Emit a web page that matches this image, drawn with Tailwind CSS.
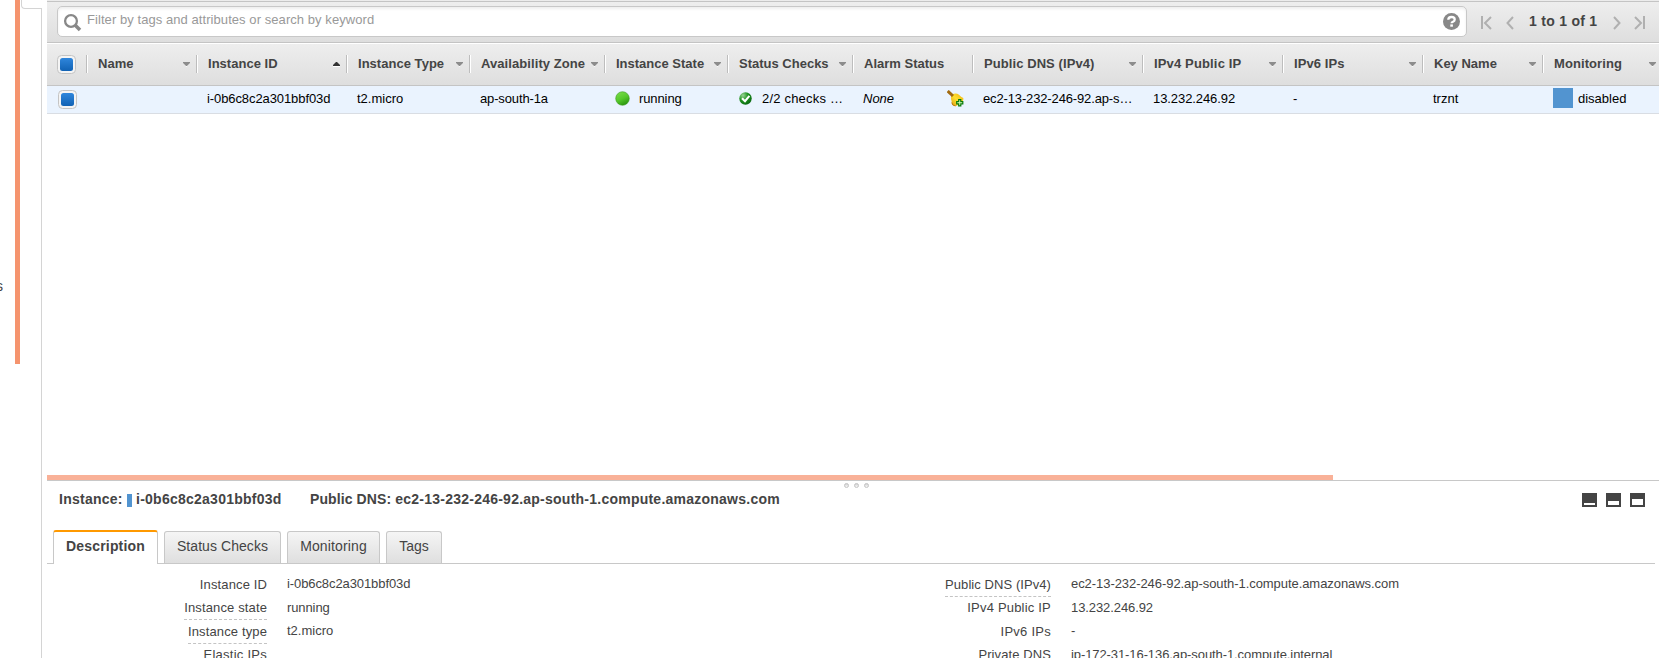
<!DOCTYPE html>
<html lang="en">
<head>
<meta charset="utf-8">
<title>EC2 Instances</title>
<script src="https://cdn.jsdelivr.net/npm/@tailwindcss/browser@4"></script>
</head>
<body class="h-[658px] w-[1659px] overflow-hidden bg-white font-['Liberation_Sans',Arial,sans-serif] text-[13px] leading-4 text-[#444]">
<svg class="absolute size-0">
  <defs>
    <linearGradient id="blue" x1="0" y1="0" x2="0" y2="1"><stop offset="0" stop-color="#2f86dc"/><stop offset="1" stop-color="#1162b4"/></linearGradient>
    <linearGradient id="ball" x1="0" y1="0" x2=".5" y2="1"><stop offset="0" stop-color="#7fe04e"/><stop offset=".6" stop-color="#55c82a"/><stop offset="1" stop-color="#2f9a10"/></linearGradient>
    <radialGradient id="ok" cx=".3" cy=".25" r=".8"><stop offset="0" stop-color="#9ad496"/><stop offset=".5" stop-color="#1f921f"/><stop offset="1" stop-color="#0a6a10"/></radialGradient>
    <linearGradient id="dot" x1="0" y1="0" x2="0" y2="1"><stop offset="0" stop-color="#ccc"/><stop offset="1" stop-color="#fff"/></linearGradient>
    <linearGradient id="bell" x1="0" y1="1" x2="1" y2="0"><stop offset="0" stop-color="#d99a10"/><stop offset=".5" stop-color="#ffe030"/><stop offset="1" stop-color="#eeb010"/></linearGradient>
    <symbol id="check" viewBox="0 0 19 19"><rect x=".5" y=".5" width="18" height="18" rx="4" fill="#f4f4f4" stroke="#c4c4c4"/><rect x="3" y="3" width="13" height="13" rx="2.5" fill="url(#blue)"/></symbol>
    <symbol id="down" viewBox="0 0 7 5"><path d="M0 1h7L3.5 5z" fill="#fff"/><path d="M0 0h7v1L4 4H3L0 1z" fill="#8c8c8c"/></symbol>
  </defs>
</svg>
<div class="flex h-full">
  <aside class="flex w-[47px] shrink-0">
    <div class="flex h-full w-[15px] items-start overflow-hidden pt-[278px]"><span class="-ml-[4px] text-[14px]">s</span></div>
    <div class="h-[364px] w-[5px] bg-[#f5946e]"></div>
    <div class="ml-px flex w-[21px] flex-col">
      <div class="h-[9px] w-[21px] rounded-bl-[4px] border-b border-l border-[#d4d4d4]"></div>
      <div class="w-[21px] flex-1 border-r border-[#d4d4d4]"></div>
    </div>
  </aside>

  <main class="flex w-[1612px] shrink-0 flex-col">
    <div class="h-px shrink-0 bg-[#ececec]"></div>
    <div class="flex h-[42px] shrink-0 items-start border-y border-[#c4c4c4] bg-linear-to-b from-[#eeeeee] to-[#dedede] pt-1 pl-[10px]">
      <div class="flex h-[31px] w-[1410px] items-center rounded-[5px] border border-[#c8c8c8] bg-white pr-[6px] pl-[5px] shadow-[inset_0_2px_3px_rgba(0,0,0,0.07)]">
        <svg class="mt-px" width="19" height="19" viewBox="0 0 19 19" fill="none"><circle cx="8" cy="8" r="5.9" stroke="#888" stroke-width="2.3"/><path d="M12 12l5 5" stroke="#888" stroke-width="3.6"/></svg>
        <span class="mb-[3px] ml-[5px] flex-1 tracking-[0.065px] text-[#999]">Filter by tags and attributes or search by keyword</span>
        <svg width="17" height="17" viewBox="0 0 17 17"><circle cx="8.500" cy="8.500" r="8.500" fill="#888"/><path d="M5.300 6.800Q5.300 4 8.500 4Q11.700 4 11.700 6.500Q11.700 8 10 8.700Q8.600 9.300 8.600 10.300" fill="none" stroke="#fff" stroke-width="2.300"/><rect x="7.300" y="11.400" width="2.600" height="2.300" fill="#fff"/></svg>
      </div>
      <div class="ml-[14px] flex h-[31px] items-center text-[14px] font-bold">
        <svg class="mt-[3px]" width="11" height="14" viewBox="0 0 11 14" fill="none" stroke="#b0b0b0" stroke-width="2"><path d="M1 0v13M10 1L4 7l6 6"/></svg>
        <svg class="mt-[3px] ml-[14px]" width="8" height="14" viewBox="0 0 8 14" fill="none" stroke="#b0b0b0" stroke-width="2"><path d="M7 1L1.500 7L7 13"/></svg>
        <span class="mb-px ml-[15px] w-[70px] tracking-[0.28px] whitespace-nowrap">1 to 1 of 1</span>
        <svg class="mt-[3px] ml-[14px]" width="8" height="14" viewBox="0 0 8 14" fill="none" stroke="#b0b0b0" stroke-width="2"><path d="M1 1l5.500 6L1 13"/></svg>
        <svg class="mt-[3px] ml-[13px]" width="11" height="14" viewBox="0 0 11 14" fill="none" stroke="#b0b0b0" stroke-width="2"><path d="M1 1l6 6l-6 6M10 0v13"/></svg>
      </div>
    </div>

    <div class="flex h-[43px] shrink-0 items-center border-t border-b border-t-white border-b-[#c4c4c4] bg-linear-to-b from-[#eeeeee] to-[#dedede] pb-[2px] font-bold tracking-[0.03px] whitespace-nowrap">
      <div class="w-[39px] pl-[10px]"><svg class="mt-px" width="19" height="19"><use href="#check"/></svg></div>
      <div class="flex h-[18px] w-[110px] items-center justify-between border-l border-[#bdbdbd] pr-[6px] pl-[11px] shadow-[inset_1px_0_0_#fff]"><span>Name</span><svg class="mt-[2px]" width="7" height="5"><use href="#down"/></svg></div>
      <div class="flex h-[18px] w-[150px] items-center justify-between border-l border-[#bdbdbd] pr-[6px] pl-[11px] shadow-[inset_1px_0_0_#fff]"><span>Instance ID</span><svg class="mt-px" width="7" height="5" viewBox="0 0 7 5"><path d="M0 4h7v1H0z" fill="#fff"/><path d="M3 0h1l3 3v1H0V3z" fill="#333"/></svg></div>
      <div class="flex h-[18px] w-[123px] items-center justify-between border-l border-[#bdbdbd] pr-[6px] pl-[11px] shadow-[inset_1px_0_0_#fff]"><span>Instance Type</span><svg class="mt-[2px]" width="7" height="5"><use href="#down"/></svg></div>
      <div class="flex h-[18px] w-[135px] items-center justify-between border-l border-[#bdbdbd] pr-[6px] pl-[11px] shadow-[inset_1px_0_0_#fff]"><span class="tracking-[0.08px]">Availability Zone</span><svg class="mt-[2px]" width="7" height="5"><use href="#down"/></svg></div>
      <div class="flex h-[18px] w-[123px] items-center justify-between border-l border-[#bdbdbd] pr-[6px] pl-[11px] shadow-[inset_1px_0_0_#fff]"><span class="tracking-normal">Instance State</span><svg class="mt-[2px]" width="7" height="5"><use href="#down"/></svg></div>
      <div class="flex h-[18px] w-[125px] items-center justify-between border-l border-[#bdbdbd] pr-[6px] pl-[11px] shadow-[inset_1px_0_0_#fff]"><span class="tracking-normal">Status Checks</span><svg class="mt-[2px]" width="7" height="5"><use href="#down"/></svg></div>
      <div class="flex h-[18px] w-[120px] items-center border-l border-[#bdbdbd] pl-[11px] shadow-[inset_1px_0_0_#fff]"><span class="tracking-normal">Alarm Status</span></div>
      <div class="flex h-[18px] w-[170px] items-center justify-between border-l border-[#bdbdbd] pr-[6px] pl-[11px] shadow-[inset_1px_0_0_#fff]"><span class="tracking-[0.08px]">Public DNS (IPv4)</span><svg class="mt-[2px]" width="7" height="5"><use href="#down"/></svg></div>
      <div class="flex h-[18px] w-[140px] items-center justify-between border-l border-[#bdbdbd] pr-[6px] pl-[11px] shadow-[inset_1px_0_0_#fff]"><span class="tracking-[0.15px]">IPv4 Public IP</span><svg class="mt-[2px]" width="7" height="5"><use href="#down"/></svg></div>
      <div class="flex h-[18px] w-[140px] items-center justify-between border-l border-[#bdbdbd] pr-[6px] pl-[11px] shadow-[inset_1px_0_0_#fff]"><span class="tracking-[0.1px]">IPv6 IPs</span><svg class="mt-[2px]" width="7" height="5"><use href="#down"/></svg></div>
      <div class="flex h-[18px] w-[120px] items-center justify-between border-l border-[#bdbdbd] pr-[6px] pl-[11px] shadow-[inset_1px_0_0_#fff]"><span class="tracking-normal">Key Name</span><svg class="mt-[2px]" width="7" height="5"><use href="#down"/></svg></div>
      <div class="flex h-[18px] w-[117px] items-center justify-between border-l border-[#bdbdbd] pr-[3px] pl-[11px] shadow-[inset_1px_0_0_#fff]"><span class="tracking-[0.08px]">Monitoring</span><svg class="mt-[2px]" width="7" height="5"><use href="#down"/></svg></div>
    </div>

    <div class="flex h-[28px] shrink-0 items-center border-b border-[#d9dde3] bg-[#eaf3fe] pb-px whitespace-nowrap text-black">
      <div class="w-[39px] pl-[11px]"><svg width="19" height="19"><use href="#check"/></svg></div>
      <div class="w-[110px]"></div>
      <div class="w-[150px] pl-[11px] tracking-[-0.09px]">i-0b6c8c2a301bbf03d</div>
      <div class="w-[123px] pl-[11px]">t2.micro</div>
      <div class="w-[135px] pl-[11px] tracking-[-0.14px]">ap-south-1a</div>
      <div class="flex w-[123px] items-center pl-[11px]"><svg class="-mt-px mr-[9px]" width="15" height="15" viewBox="0 0 15 15"><circle cx="7.500" cy="7.500" r="6.800" fill="url(#ball)" stroke="#3a9a20" stroke-width=".6"/></svg><span class="tracking-[-0.1px]">running</span></div>
      <div class="flex w-[125px] items-center pl-[12px]"><svg class="-mt-px mr-[9px]" width="13" height="13" viewBox="0 0 13 13"><circle cx="6.500" cy="6.500" r="6.200" fill="url(#ok)"/><path d="M3 6.300l3 2.900l4.400-5.400" fill="none" stroke="#fff" stroke-width="2.100"/></svg><span class="pl-px tracking-[0.2px]">2/2 checks …</span></div>
      <div class="flex w-[120px] items-center justify-between pr-[8px] pl-[11px]"><span class="italic">None</span>
        <svg class="-mt-px" width="17" height="17" viewBox="0 0 17 17"><path d="M5 4.500Q9 2.500 12 4.800Q14 7 16.300 8Q17 11 13 14L9 16Q6 16.500 5 14Q4.800 11 4 9Q3.400 6 5 4.500z" fill="url(#bell)"/><path d="M.7 1L6 6" stroke="#a26a10" stroke-width="3"/><path d="M4.800 12.500Q4.800 15.500 8.500 16" fill="none" stroke="#b97a10"/><path d="M11.700 9.700h2.100v2h2v2.100h-2v2h-2.100v-2h-2v-2.100h2z" fill="#d8ffc0" stroke="#087a08" stroke-width="1.200"/></svg>
      </div>
      <div class="w-[170px] pl-[11px] tracking-[-0.14px]">ec2-13-232-246-92.ap-s…</div>
      <div class="w-[140px] pl-[11px] tracking-[-0.08px]">13.232.246.92</div>
      <div class="w-[140px] pl-[11px]">-</div>
      <div class="w-[120px] pl-[11px]">trznt</div>
      <div class="flex w-[117px] items-center pl-[11px]"><span class="-mt-[2px] mr-[5px] size-5 bg-[#5294d0]"></span>disabled</div>
    </div>

    <div class="flex flex-1 items-end"><div class="h-[5px] w-[1286px] bg-[#f9b198]"></div></div>

    <section class="flex h-[178px] shrink-0 flex-col overflow-hidden border-t border-[#c8c8c8]">
      <div class="flex h-[7px] shrink-0 gap-[5px] pt-[2px] pl-[797px]">
        <svg width="5" height="5" viewBox="0 0 5 5"><circle cx="2.500" cy="2.500" r="2" fill="url(#dot)" stroke="#c4c4c4"/></svg>
        <svg width="5" height="5" viewBox="0 0 5 5"><circle cx="2.500" cy="2.500" r="2" fill="url(#dot)" stroke="#c4c4c4"/></svg>
        <svg width="5" height="5" viewBox="0 0 5 5"><circle cx="2.500" cy="2.500" r="2" fill="url(#dot)" stroke="#c4c4c4"/></svg>
      </div>
      <div class="flex h-[42px] shrink-0 items-start pr-[14px] pl-[12px] text-[14px] font-bold">
        <div class="flex w-[251px] pt-[3px] tracking-[0.25px] whitespace-nowrap"><span class="w-[68px]">Instance:</span><span class="mt-[3px] mr-1 h-[13px] w-[5px] bg-[#5294d0]"></span><span>i-0b6c8c2a301bbf03d</span></div>
        <div class="flex-1 pt-[3px]"><span class="tracking-[0.1px]">Public DNS: </span><span class="tracking-[0.24px]">ec2-13-232-246-92.ap-south-1.compute.amazonaws.com</span></div>
        <div class="flex gap-[9px] pt-[5px]">
          <svg width="15" height="14"><path fill="#444" d="M0 0h15v14H0z"/><path fill="#fff" d="M2 10h11v2H2z"/></svg>
          <svg width="15" height="14"><path fill="#444" d="M0 0h15v14H0z"/><path fill="#fff" d="M2 8h11v4H2z"/></svg>
          <svg width="15" height="14"><path fill="#444" d="M0 0h15v14H0z"/><path fill="#fff" d="M2 6h11v6H2z"/></svg>
        </div>
      </div>
      <div class="flex h-[34px] w-[1608px] shrink-0 items-end text-[14px]">
        <div class="h-px w-[6px] bg-[#c8c8c8]"></div>
        <div class="h-[34px] w-[105px] rounded-t-[3px] border-x border-t-2 border-x-[#c8c8c8] border-t-[#ff9900] pt-[6px] text-center font-bold tracking-[0.18px]">Description</div>
        <div class="flex h-[33px] flex-1 gap-[6px] border-b border-[#c8c8c8] pl-[6px] text-center">
          <div class="w-[117px] rounded-t-[3px] border-x border-t border-[#c8c8c8] bg-linear-to-b from-[#f5f5f5] to-[#dfdfdf] pt-[6px] tracking-[0.06px]">Status Checks</div>
          <div class="w-[93px] rounded-t-[3px] border-x border-t border-[#c8c8c8] bg-linear-to-b from-[#f5f5f5] to-[#dfdfdf] pt-[6px] tracking-[0.13px]">Monitoring</div>
          <div class="w-[56px] rounded-t-[3px] border-x border-t border-[#c8c8c8] bg-linear-to-b from-[#f5f5f5] to-[#dfdfdf] pt-[6px]">Tags</div>
        </div>
      </div>
      <div class="flex shrink-0 pt-[12px]">
        <dl class="grid w-[784px] grid-cols-[220px_1fr] grid-rows-[23px_24px_23px_24px] gap-x-5 whitespace-nowrap">
          <dt class="pt-px text-right tracking-[0.13px]">Instance ID</dt><dd class="tracking-[-0.09px]">i-0b6c8c2a301bbf03d</dd>
          <dt class="flex justify-end"><span class="h-[21px] border-b border-dashed border-[#c4c4c4] pt-px tracking-[0.13px]">Instance state</span></dt><dd class="pt-px tracking-[-0.1px]">running</dd>
          <dt class="flex justify-end"><span class="h-[21px] border-b border-dashed border-[#c4c4c4] pt-px tracking-[0.13px]">Instance type</span></dt><dd>t2.micro</dd>
          <dt class="pt-px text-right tracking-[0.25px]">Elastic IPs</dt><dd></dd>
        </dl>
        <dl class="grid w-[784px] grid-cols-[220px_1fr] grid-rows-[23px_24px_23px_24px] gap-x-5 whitespace-nowrap">
          <dt class="flex justify-end"><span class="h-[21px] border-b border-dashed border-[#c4c4c4] pt-px tracking-[0.07px]">Public DNS (IPv4)</span></dt><dd class="tracking-[-0.06px]">ec2-13-232-246-92.ap-south-1.compute.amazonaws.com</dd>
          <dt class="pt-px text-right tracking-[0.2px]">IPv4 Public IP</dt><dd class="pt-px tracking-[-0.09px]">13.232.246.92</dd>
          <dt class="pt-px text-right tracking-[0.25px]">IPv6 IPs</dt><dd>-</dd>
          <dt class="pt-px text-right tracking-[0.1px]">Private DNS</dt><dd class="pt-px tracking-[-0.09px]">ip-172-31-16-136.ap-south-1.compute.internal</dd>
        </dl>
      </div>
    </section>
  </main>
</div>
</body>
</html>
